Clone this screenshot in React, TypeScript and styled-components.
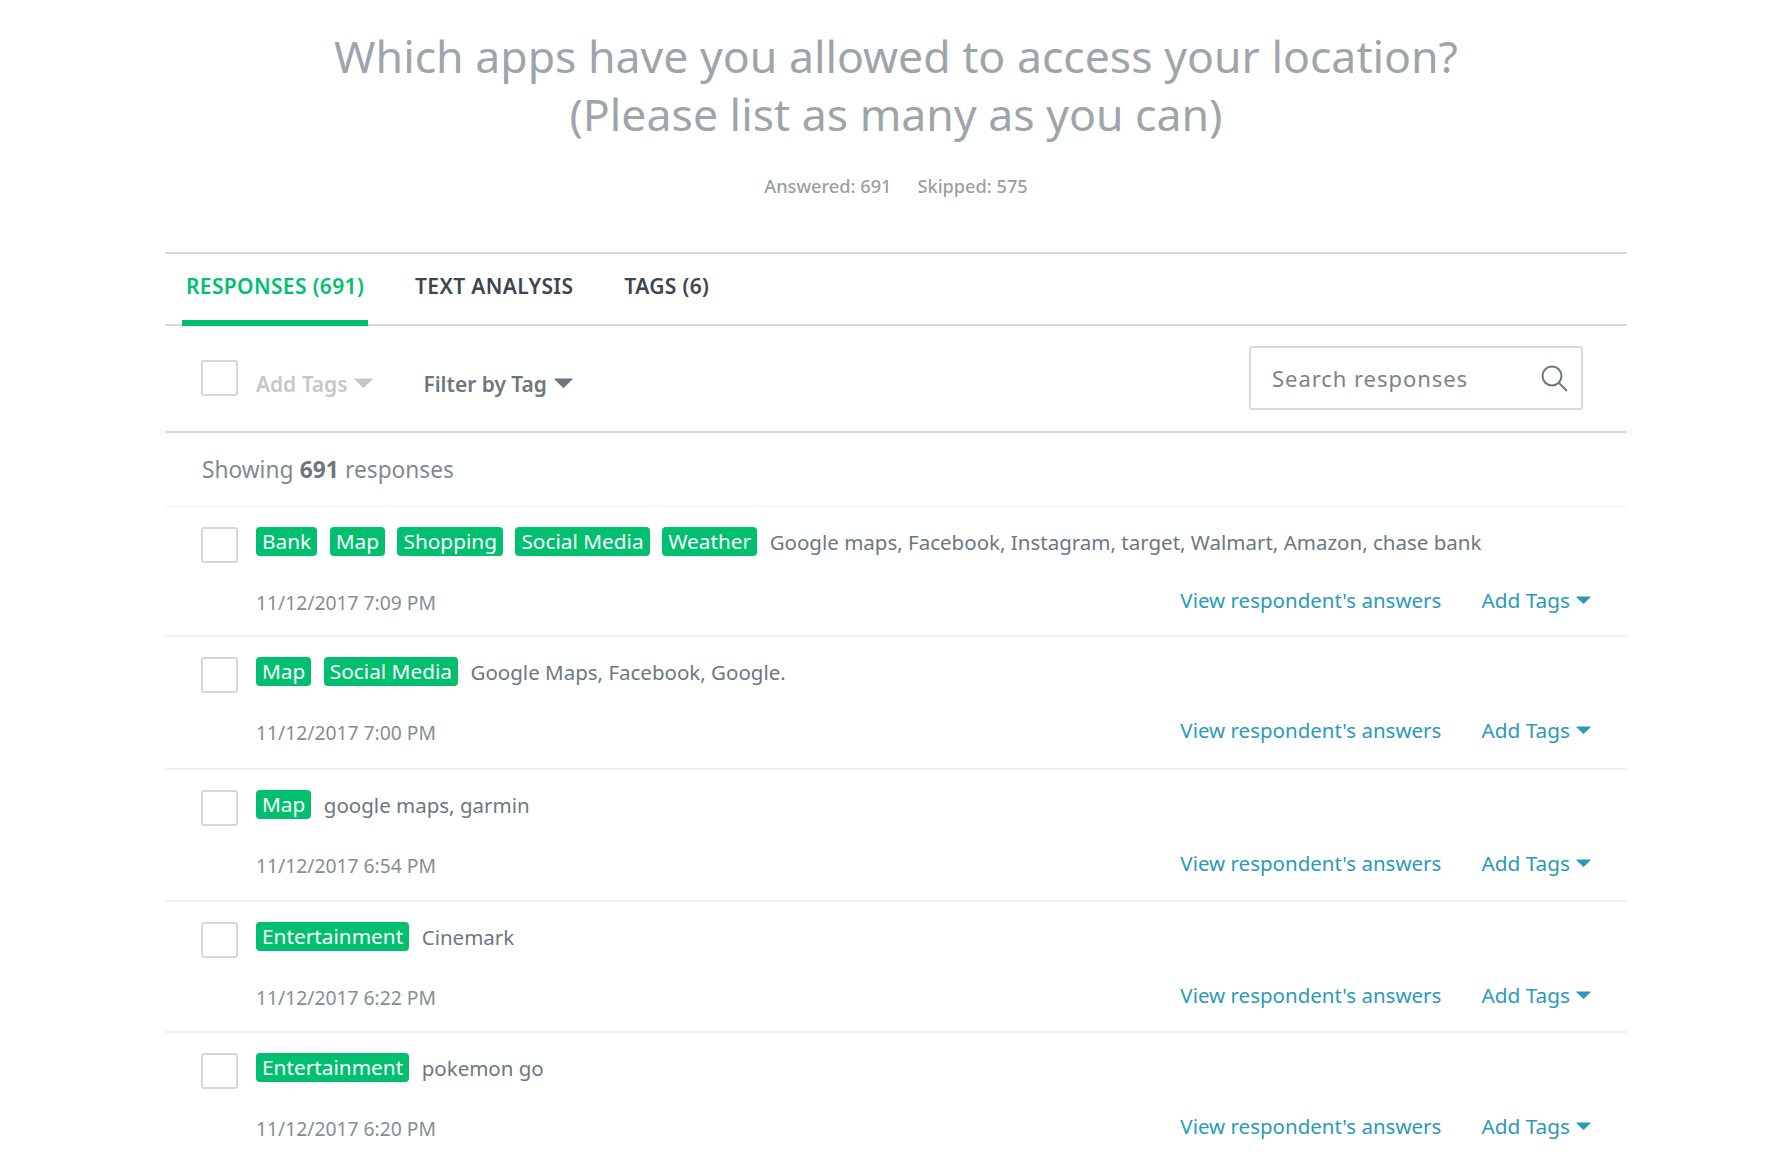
import * as React from 'react';
import styled, {createGlobalStyle} from 'styled-components';

const GlobalStyle = createGlobalStyle`
    html, body {
        margin: 0;
        background: #ffffff;
        font-family: "Noto Sans", "Open Sans", sans-serif;
    }
`;

const Page = styled.div`
    width: 1462px;
    margin-left: 165px;
    height: 1163px;
    overflow: hidden;
`;

const Header = styled.header`
    display: flex;
    flex-direction: column;
    align-items: center;
    height: 252px;
    padding-top: 27px;
    box-sizing: border-box;
`;

const Title = styled.h1`
    margin: 0;
    font-size: 44.6px;
    line-height: 58px;
    font-weight: 400;
    color: #9da5ab;
    text-align: center;
`;

const Stats = styled.div`
    display: flex;
    gap: 26px;
    margin-top: 30px;
    font-size: 18.2px;
    line-height: 26px;
    font-weight: 500;
    color: #9a9fa3;
`;

const Tabs = styled.nav`
    display: flex;
    height: 74px;
    box-sizing: border-box;
    padding-left: 17px;
    border-top: 2px solid #d9dadb;
    border-bottom: 2px solid #d9dadb;
    gap: 43px;
`;

const Tab = styled.div<{$active?: boolean}>`
    display: flex;
    align-items: center;
    height: 72px;
    box-sizing: border-box;
    padding: 0 4px 3px;
    font-size: 21px;
    letter-spacing: 0.35px;
    font-weight: 600;
    color: ${(p) => (p.$active ? '#00bf6f' : '#3d4650')};
    border-bottom: 6px solid ${(p) => (p.$active ? '#00bf6f' : 'transparent')};
`;

const Toolbar = styled.div`
    display: flex;
    align-items: center;
    height: 107px;
    box-sizing: border-box;
    padding: 0 44px 0 36px;
    border-bottom: 2px solid #d9dadb;
`;

const Checkbox = styled.span`
    display: block;
    flex: none;
    width: 37px;
    height: 36px;
    box-sizing: border-box;
    border: 2px solid #d5d7d9;
    border-radius: 3px;
    background: #fff;
`;

const HeadCheckbox = styled(Checkbox)`
    margin-bottom: 2px;
`;

const ToolButton = styled.div<{$muted?: boolean}>`
    display: flex;
    align-items: center;
    gap: 7px;
    margin-left: ${(p) => (p.$muted ? '18px' : '50px')};
    padding-top: 10px;
    font-size: 20.9px;
    font-weight: 600;
    color: ${(p) => (p.$muted ? '#c4c8cb' : '#6b787f')};
`;

const Search = styled.div`
    display: flex;
    align-items: center;
    justify-content: space-between;
    width: 334px;
    height: 64px;
    margin-left: auto;
    margin-top: -2px;
    box-sizing: border-box;
    padding: 0 13px 0 21px;
    border: 2px solid #d9dadb;
    border-radius: 3px;
    font-size: 22px;
    letter-spacing: 0.95px;
    color: #7b8288;
`;

const Showing = styled.div`
    display: flex;
    align-items: center;
    gap: 0.28em;
    height: 74px;
    box-sizing: border-box;
    padding-left: 37px;
    font-size: 22.7px;
    color: #7f8a91;
    border-bottom: 1px solid #eff0f1;

    b {
        font-weight: 700;
        color: #6b787f;
    }
`;

const Row = styled.article<{$height: number}>`
    display: flex;
    gap: 18px;
    height: ${(p) => p.$height}px;
    box-sizing: border-box;
    padding: 20px 36px 0 36px;
    border-bottom: 2px solid #eff0f1;
`;

const RowBody = styled.div`
    flex: 1;
    display: flex;
    flex-direction: column;
`;

const RowTop = styled.div`
    display: flex;
    align-items: center;
    gap: 12.5px;
    height: 29px;
`;

const Tag = styled.span`
    display: block;
    padding: 0 6px;
    line-height: 29px;
    border-radius: 4px;
    background: #00bf6f;
    color: #ffffff;
    font-size: 20.8px;
`;

const Answer = styled.span`
    font-size: 20.5px;
    color: #6b787f;
`;

const RowBottom = styled.div`
    display: flex;
    align-items: center;
    margin-top: 29px;
    height: 30px;
    font-size: 20.5px;
`;

const DateText = styled.span`
    color: #848e95;
    padding-top: 4px;
    font-size: 19.3px;
`;

const Link = styled.a`
    color: #2a9ab9;
    margin-left: auto;
`;

const AddTags = styled.a`
    display: flex;
    align-items: center;
    gap: 6px;
    margin-left: 40px;
    font-size: 20.8px;
    color: #2a9ab9;
`;

const Caret: React.FC<{color: string; width: number}> = ({color, width}) => (
    <svg width={width} height={width * 0.55} viewBox="0 0 20 11">
        <path d="M1 0.5h18a0.6 0.6 0 0 1 .4 1L10.5 10.4a0.7 0.7 0 0 1-1 0L.6 1.5a0.6 0.6 0 0 1 .4-1z" fill={color} />
    </svg>
);

const responses = [
    {tags: ['Bank', 'Map', 'Shopping', 'Social Media', 'Weather'], text: 'Google maps, Facebook, Instagram, target, Walmart, Amazon, chase bank', date: '11/12/2017 7:09 PM', height: 130},
    {tags: ['Map', 'Social Media'], text: 'Google Maps, Facebook, Google.', date: '11/12/2017 7:00 PM', height: 133},
    {tags: ['Map'], text: 'google maps, garmin', date: '11/12/2017 6:54 PM', height: 132},
    {tags: ['Entertainment'], text: 'Cinemark', date: '11/12/2017 6:22 PM', height: 131},
    {tags: ['Entertainment'], text: 'pokemon go', date: '11/12/2017 6:20 PM', height: 132},
];

const App: React.FC = () => (
    <Page>
        <GlobalStyle />
        <Header>
            <Title>
                Which apps have you allowed to access your location?
                <br />
                (Please list as many as you can)
            </Title>
            <Stats>
                <span>Answered: 691</span>
                <span>Skipped: 575</span>
            </Stats>
        </Header>
        <Tabs>
            <Tab $active>RESPONSES (691)</Tab>
            <Tab>TEXT ANALYSIS</Tab>
            <Tab>TAGS (6)</Tab>
        </Tabs>
        <Toolbar>
            <HeadCheckbox />
            <ToolButton $muted>
                Add Tags <Caret color="#c4c8cb" width={19} />
            </ToolButton>
            <ToolButton>
                Filter by Tag <Caret color="#6b787f" width={19} />
            </ToolButton>
            <Search>
                Search responses
                <svg width="28" height="28" viewBox="0 0 28 28" fill="none" stroke="#6b787f" strokeWidth="2">
                    <circle cx="12" cy="12" r="9.5" />
                    <path d="M19 19l8 8" />
                </svg>
            </Search>
        </Toolbar>
        <Showing>
            Showing <b>691</b> responses
        </Showing>
        {responses.map((r) => (
            <Row key={r.date} $height={r.height}>
                <Checkbox />
                <RowBody>
                    <RowTop>
                        {r.tags.map((t) => (
                            <Tag key={t}>{t}</Tag>
                        ))}
                        <Answer>{r.text}</Answer>
                    </RowTop>
                    <RowBottom>
                        <DateText>{r.date}</DateText>
                        <Link>View respondent's answers</Link>
                        <AddTags>
                            Add Tags <Caret color="#2a9ab9" width={15} />
                        </AddTags>
                    </RowBottom>
                </RowBody>
            </Row>
        ))}
    </Page>
);

export default App;
